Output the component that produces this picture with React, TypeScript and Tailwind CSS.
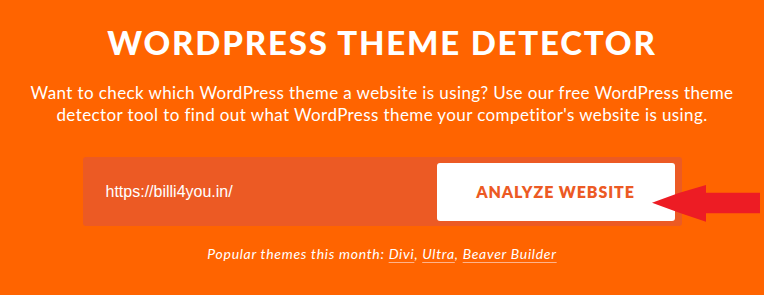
import React from "react";

export default function App() {
  return (
    <div className="relative w-[764px] h-[295px] overflow-hidden bg-[#ff6400] flex flex-col items-center text-white" style={{ fontFamily: "Lato, 'Open Sans', sans-serif" }}>
      <h1 className="mt-[26px] text-[33px] leading-[32px] font-black tracking-[1.8px] text-white whitespace-nowrap">WORDPRESS THEME DETECTOR</h1>
      <p className="mt-[24px] w-[740px] text-center text-[17px] leading-[22px] font-normal tracking-[0.4px]">
        Want to check which WordPress theme a website is using? Use our free WordPress theme detector tool to find out what WordPress theme your competitor's website is using.
      </p>
      <div className="mt-[31px] w-[599px] h-[69px] rounded-[3px] bg-[#ec5a24] flex items-center justify-between pl-[23px] pr-[7px]">
        <span className="text-[16px] text-white" style={{ fontFamily: "'Liberation Sans', Arial, sans-serif" }}>https://billi4you.in/</span>
        <button className="w-[238px] h-[58px] rounded-[3px] bg-white text-[#ec5a24] text-[16px] font-extrabold tracking-[0.9px] mt-[1px]">ANALYZE WEBSITE</button>
      </div>
      <p className="mt-[18px] text-[14px] italic leading-[20px] tracking-[0.7px]">
        Popular themes this month:{" "}
        <span className="underline decoration-[#ffb38a] underline-offset-[3px]">Divi</span>,{" "}
        <span className="underline decoration-[#ffb38a] underline-offset-[3px]">Ultra</span>,{" "}
        <span className="underline decoration-[#ffb38a] underline-offset-[3px]">Beaver Builder</span>
      </p>
      <svg className="absolute left-[651px] top-[184px]" width="113" height="39" viewBox="0 0 113 39">
        <path d="M1 18.7 Q28 8 55 1 L55 8.7 L109 8.7 L109 29.3 L55 29.3 L55 37.7 Q28 29 1 18.7 Z" fill="#ed1c24" />
      </svg>
    </div>
  );
}
